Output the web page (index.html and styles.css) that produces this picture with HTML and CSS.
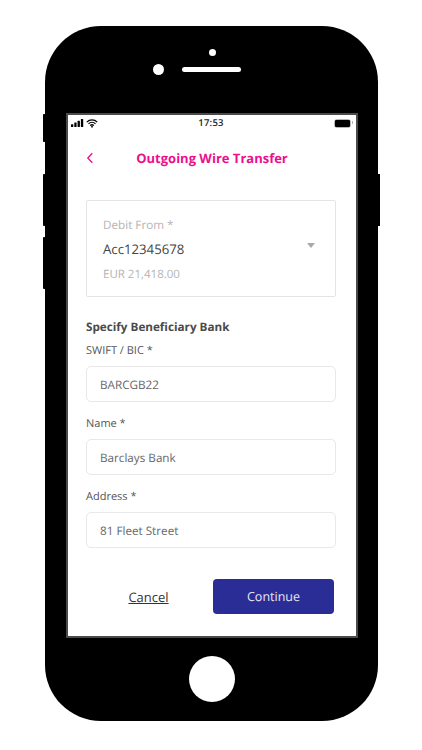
FILE: index.html
```html
<!DOCTYPE html>
<html lang="en">
<head>
<meta charset="utf-8">
<title>Outgoing Wire Transfer</title>
<link rel="stylesheet" href="styles.css">
</head>
<body>
<div class="phone">
  <span class="side left mute"></span>
  <span class="side left vol-up"></span>
  <span class="side left vol-down"></span>
  <span class="side right power"></span>
  <div class="bezel-top">
    <span class="sensor"></span>
    <div class="cam-row">
      <span class="camera"></span>
      <span class="speaker"></span>
    </div>
  </div>
  <div class="screen">
    <div class="status">
      <div class="status-left">
        <svg class="signal" width="13" height="8" viewBox="0 0 13 8"><rect x="0" y="5.2" width="2.3" height="2.8" rx=".5"/><rect x="3.3" y="3.6" width="2.3" height="4.4" rx=".5"/><rect x="6.6" y="1.8" width="2.3" height="6.2" rx=".5"/><rect x="9.9" y="0" width="2.3" height="8" rx=".5"/></svg>
        <svg class="wifi" width="12" height="9" viewBox="0 0 12 9"><path d="M.8 3.1a7.4 7.4 0 0 1 10.4 0M2.5 4.9a5 5 0 0 1 7 0M4.2 6.6a2.6 2.6 0 0 1 3.6 0" fill="none" stroke="#000" stroke-width="1.3"/><path d="M6 9 4.8 7.6a1.7 1.7 0 0 1 2.4 0z"/></svg>
      </div>
      <span class="time">17:53</span>
      <div class="battery"><span class="battery-fill"></span></div>
    </div>
    <header class="nav">
      <svg class="back" width="8" height="12" viewBox="0 0 8 12"><path d="M6.3 1.2 1.8 6l4.5 4.8" fill="none" stroke="#ec0f8c" stroke-width="1.3"/></svg>
      <h1 class="title">Outgoing Wire Transfer</h1>
    </header>
    <main class="form">
      <div class="debit">
        <div class="debit-text">
          <div class="debit-label">Debit From *</div>
          <div class="debit-value">Acc12345678</div>
          <div class="debit-balance">EUR 21,418.00</div>
        </div>
        <span class="caret"></span>
      </div>
      <h2 class="section">Specify Beneficiary Bank</h2>
      <div class="label first">SWIFT / BIC *</div>
      <div class="input">BARCGB22</div>
      <div class="label">Name *</div>
      <div class="input">Barclays Bank</div>
      <div class="label">Address *</div>
      <div class="input">81 Fleet Street</div>
      <div class="actions">
        <a class="cancel">Cancel</a>
        <button class="continue">Continue</button>
      </div>
    </main>
  </div>
  <div class="bezel-bottom"><span class="home"></span></div>
</div>
</body>
</html>
```
FILE: styles.css
```css
html, body { margin: 0; padding: 0; background: #fff; }
body { height: 750px; overflow: hidden; font-family: "Open Sans", sans-serif; text-rendering: geometricPrecision; padding-top: 26px; box-sizing: border-box; }
.phone { position: relative; width: 333px; height: 695px; margin-left: 45px; background: #000; border-radius: 56px; display: flex; flex-direction: column; align-items: center; }
.side { position: absolute; width: 3px; background: #000; }
.side.left { left: -2px; border-radius: 1px 0 0 1px; }
.side.right { right: -2px; }
.mute { top: 88px; height: 28px; }
.vol-up { top: 148px; height: 52px; }
.vol-down { top: 211px; height: 52px; }
.power { top: 148px; height: 52px; }
.bezel-top { height: 87px; width: 100%; flex: none; display: flex; flex-direction: column; align-items: center; padding-top: 23px; box-sizing: border-box; }
.sensor { width: 7px; height: 7px; background: #fff; border-radius: 50%; margin-left: 1px; }
.cam-row { position: relative; margin-top: 11px; }
.speaker { display: block; width: 59px; height: 5px; border-radius: 3px; background: #fff; }
.camera { position: absolute; left: -29px; top: -3px; width: 11px; height: 11px; border-radius: 50%; background: #fff; }
.screen { width: 292px; height: 525px; flex: none; margin-left: 1px; background: #fff; border: 2px solid #4a4a4a; box-sizing: border-box; display: flex; flex-direction: column; }
.status { height: 15px; flex: none; display: grid; grid-template-columns: 1fr auto 1fr; align-items: center; padding: 1px 5px 0 3px; box-sizing: border-box; }
.status-left { display: flex; align-items: center; gap: 2px; }
.signal, .wifi { display: block; }
.time { font-size: 9.5px; font-weight: 600; color: #222; letter-spacing: .2px; line-height: 14px; }
.battery { position: relative; justify-self: end; width: 17px; height: 9px; box-sizing: border-box; border: 1.5px solid #b4b4b4; border-radius: 3px; display: flex; }
.battery::after { content: ""; position: absolute; right: -3px; top: 1.5px; width: 1px; height: 3px; background: #b4b4b4; }
.battery-fill { flex: 1; background: #000; border-radius: 1px; }
.nav { position: relative; height: 56px; flex: none; display: flex; align-items: center; justify-content: center; }
.back { position: absolute; left: 18px; top: 22px; }
.title { margin: 0; font-size: 13px; font-weight: 700; color: #ec0f8c; line-height: 20px; }
.form { padding: 14px 20px 0 18px; flex: 1; display: flex; flex-direction: column; }
.debit { height: 97px; box-sizing: border-box; border: 1px solid #e4e4e4; border-radius: 2px; display: flex; padding: 14px 20px 0 16px; justify-content: space-between; }
.debit-label { font-size: 11.7px; line-height: 20px; color: #b4b4b4; }
.debit-value { font-size: 13.2px; line-height: 20px; color: #444; margin-top: 4px; }
.debit-balance { font-size: 11.5px; line-height: 20px; color: #b4b4b4; margin-top: 6px; }
.caret { width: 0; height: 0; border-left: 4px solid transparent; border-right: 4px solid transparent; border-top: 5px solid #a8a8a8; margin-top: 28px; }
.section { margin: 20px 0 0; font-size: 11.7px; font-weight: 700; line-height: 20px; color: #4a4a4a; }
.label { font-size: 11px; line-height: 20px; color: #555; margin-top: 12px; }
.label.first { margin-top: 4px; }
.input { height: 36px; box-sizing: border-box; margin-top: 5px; border: 1px solid #e8e8e8; border-radius: 5px; padding-left: 13px; font-size: 11.7px; line-height: 36px; color: #666; }
.actions { display: flex; align-items: center; margin-top: 31px; }
.cancel { width: 125px; text-align: center; font-size: 13px; color: #333; text-decoration: underline; }
.continue { width: 121px; height: 35px; border: 0; border-radius: 4px; background: #2a2d96; color: #e8e8f4; font: 400 12.5px "Open Sans", sans-serif; text-rendering: geometricPrecision; margin-left: 2px; }
.bezel-bottom { flex: 1; width: 100%; display: flex; justify-content: center; padding-top: 18px; box-sizing: border-box; }
.home { width: 46px; height: 46px; border-radius: 50%; background: #fff; }
```
